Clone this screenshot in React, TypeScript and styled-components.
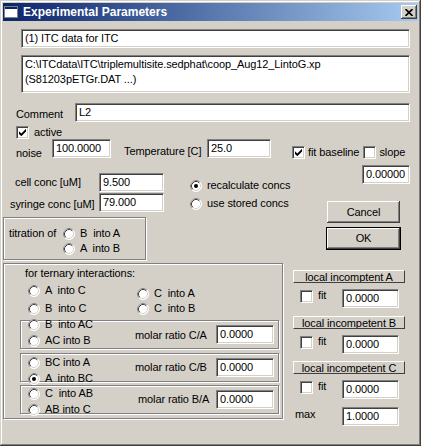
import React from "react";
import styled, { createGlobalStyle } from "styled-components";

const GlobalStyle = createGlobalStyle`
  html, body { margin: 0; padding: 0; background: #D4D0C8; }
  body { font-family: "Liberation Sans", Arial, sans-serif; font-size: 11px; color: #000; }
  * { box-sizing: border-box; }
`;

const Window = styled.div`
  width: 421px;
  height: 446px;
  background: #d4d0c8;
  padding: 3px;
  box-shadow: inset -1px -1px #404040, inset 1px 1px #d4d0c8, inset -2px -2px #808080, inset 2px 2px #ffffff;
  display: flex;
  flex-direction: column;
  letter-spacing: -0.1px;
`;

const TitleBar = styled.div`
  height: 18px;
  flex: none;
  display: flex;
  align-items: center;
  padding: 0 1px 0 1px;
  background: linear-gradient(to right, #0a246a, #a6caf0);
`;

const TitleText = styled.span`
  flex: 1;
  margin-left: 5px;
  color: #fff;
  font-weight: bold;
  font-size: 12px;
  letter-spacing: 0;
  line-height: 14px;
`;

const CloseButton = styled.div`
  width: 16px;
  height: 14px;
  background: #d4d0c8;
  display: flex;
  align-items: center;
  justify-content: center;
  box-shadow: inset -1px -1px #404040, inset 1px 1px #ffffff, inset -2px -2px #808080;
`;

const Body = styled.div`
  flex: 1;
  display: flex;
  flex-direction: column;
`;

type Box = { $w?: number; $h?: number; $mt?: number; $ml?: number; $mr?: number; $grow?: boolean; $self?: string };

const Field = styled.div<Box>`
  flex: ${(p) => (p.$grow ? "1" : "none")};
  width: ${(p) => (p.$w ? `${p.$w}px` : "auto")};
  height: ${(p) => p.$h ?? 19}px;
  margin: ${(p) => `${p.$mt ?? 0}px ${p.$mr ?? 0}px 0 ${p.$ml ?? 0}px`};
  align-self: ${(p) => p.$self ?? "auto"};
  background: #fff;
  border: 1px solid;
  border-color: #808080 #ffffff #ffffff #808080;
  box-shadow: inset 1px 1px #404040, inset -1px -1px #d4d0c8;
  padding: 1px 3px;
  line-height: 15px;
  white-space: pre;
  overflow: hidden;
`;

const Row = styled.div<{ $mt?: number; $pl?: number; $h?: number; $align?: string }>`
  display: flex;
  align-items: ${(p) => p.$align ?? "flex-start"};
  margin-top: ${(p) => p.$mt ?? 0}px;
  padding-left: ${(p) => p.$pl ?? 0}px;
  height: ${(p) => (p.$h ? `${p.$h}px` : "auto")};
  flex: none;
`;

const Label = styled.span<{ $w?: number; $ml?: number; $mt?: number; $pl?: number }>`
  display: inline-block;
  flex: none;
  width: ${(p) => (p.$w ? `${p.$w}px` : "auto")};
  margin-left: ${(p) => p.$ml ?? 0}px;
  margin-top: ${(p) => p.$mt ?? 0}px;
  padding-left: ${(p) => p.$pl ?? 0}px;
  line-height: 13px;
  white-space: pre;
`;

const CheckBoxFrame = styled.span<{ $ml?: number; $mt?: number }>`
  display: inline-flex;
  flex: none;
  width: 13px;
  height: 13px;
  margin-left: ${(p) => p.$ml ?? 0}px;
  margin-top: ${(p) => p.$mt ?? 0}px;
  background: #fff;
  border: 1px solid;
  border-color: #808080 #ffffff #ffffff #808080;
  box-shadow: inset 1px 1px #404040, inset -1px -1px #d4d0c8;
  align-items: center;
  justify-content: center;
`;

function Check({ checked, ml, mt }: { checked?: boolean; ml?: number; mt?: number }) {
  return (
    <CheckBoxFrame $ml={ml} $mt={mt}>
      {checked && (
        <svg width="7" height="7" viewBox="0 0 7 7">
          <path d="M0 2.2 L2.3 4.5 L7 -0.2 L7 2.6 L2.3 7.2 L0 4.9 Z" fill="#000" />
        </svg>
      )}
    </CheckBoxFrame>
  );
}

const RadioSvg = styled.svg`
  flex: none;
  display: block;
`;

function Radio({ checked }: { checked?: boolean }) {
  return (
    <RadioSvg width="12" height="12" viewBox="0 0 12 12">
      <circle cx="6" cy="6" r="5.5" fill="#fff" stroke="#fff" />
      <path d="M2.11 9.89 A5.5 5.5 0 0 1 9.89 2.11" stroke="#808080" fill="none" />
      <path d="M2.82 9.18 A4.5 4.5 0 0 1 9.18 2.82" stroke="#404040" fill="none" />
      <path d="M9.18 2.82 A4.5 4.5 0 0 1 2.82 9.18" stroke="#d4d0c8" fill="none" />
      {checked && <circle cx="6" cy="6" r="2" fill="#000" />}
    </RadioSvg>
  );
}

const RadioCol = styled.div<{ $ml?: number; $mt?: number; $gap?: number; $w?: number }>`
  display: flex;
  flex-direction: column;
  flex: none;
  width: ${(p) => (p.$w ? `${p.$w}px` : "auto")};
  margin-left: ${(p) => p.$ml ?? 0}px;
  margin-top: ${(p) => p.$mt ?? 0}px;
  gap: ${(p) => p.$gap ?? 2}px;
`;

const RadioItem = styled.div`
  display: flex;
  align-items: center;
  height: 13px;
  gap: 5px;
  line-height: 13px;
  white-space: pre;
`;

function Opt({ label, checked }: { label: string; checked?: boolean }) {
  return (
    <RadioItem>
      <Radio checked={checked} />
      <span>{label}</span>
    </RadioItem>
  );
}

const GroupBox = styled.div<Box>`
  flex: none;
  width: ${(p) => p.$w}px;
  height: ${(p) => p.$h}px;
  margin-top: ${(p) => p.$mt ?? 0}px;
  margin-left: ${(p) => p.$ml ?? 0}px;
  border: 1px solid #808080;
  box-shadow: inset 1px 1px #ffffff, 1px 1px 0 #ffffff;
  display: flex;
  flex-direction: column;
`;

const SubBox = styled(GroupBox)`
  flex-direction: row;
  align-items: flex-start;
  padding-left: 7px;
`;

const Columns = styled.div`
  display: flex;
  margin-top: 7px;
`;

const LeftCol = styled.div`
  width: 280px;
  flex: none;
  display: flex;
  flex-direction: column;
`;

const RightCol = styled.div`
  flex: 1;
  margin-left: 10px;
  display: flex;
  flex-direction: column;
`;

const ConcArea = styled.div`
  display: flex;
  margin-top: 8px;
`;

const Stack = styled.div`
  display: flex;
  flex-direction: column;
`;

const Button = styled.div<Box>`
  flex: none;
  width: ${(p) => p.$w}px;
  height: ${(p) => p.$h}px;
  margin-top: ${(p) => p.$mt ?? 0}px;
  margin-left: ${(p) => p.$ml ?? 0}px;
  background: #d4d0c8;
  box-shadow: inset -1px -1px #404040, inset 1px 1px #ffffff, inset -2px -2px #808080, inset 2px 2px #d4d0c8;
  display: flex;
  align-items: center;
  justify-content: center;
  line-height: 13px;
`;

const DefaultButton = styled(Button)`
  border: 1px solid #000;
`;

const HeaderButton = styled.div<{ $mt?: number }>`
  flex: none;
  width: 112px;
  height: 13px;
  margin-top: ${(p) => p.$mt ?? 0}px;
  background: #d4d0c8;
  border-top: 1px solid #ffffff;
  border-left: 1px solid #ffffff;
  border-right: 1px solid #404040;
  border-bottom: 1px solid #404040;
  overflow: hidden;
  text-align: center;
  line-height: 11px;
  padding-top: 1px;
  white-space: pre;
`;

const Heading = styled.div`
  padding: 3px 0 0 21px;
  line-height: 13px;
`;

const TernaryRadios = styled.div`
  display: flex;
  margin: 4px 0 0 24px;
`;

const SubBoxes = styled.div`
  display: flex;
  flex-direction: column;
  margin-left: 16px;
`;

function FitRow({ mt, value }: { mt: number; value: string }) {
  return (
    <Row $mt={mt} $h={19}>
      <Check ml={7} mt={1} />
      <Label $ml={5} $w={24} $mt={0}>fit</Label>
      <Field $w={57}>{value}</Field>
    </Row>
  );
}

function RatioBox({ mt, radioMt, a, b, bChecked, ratio, labelMt, labelPl }: {
  mt: number; radioMt: number; a: string; b: string; bChecked?: boolean; ratio: string; labelMt: number; labelPl: number;
}) {
  return (
    <SubBox $w={259} $h={29} $mt={mt}>
      <RadioCol $w={107} $mt={radioMt} $gap={3}>
        <Opt label={a} />
        <Opt label={b} checked={bChecked} />
      </RadioCol>
      <Label $w={81} $mt={labelMt} $pl={labelPl}>{ratio}</Label>
      <Field $w={58} $mt={4}>0.0000</Field>
    </SubBox>
  );
}

export default function App() {
  return (
    <>
      <GlobalStyle />
      <Window>
        <TitleBar>
          <svg width="14" height="12" viewBox="0 0 14 12" style={{ display: "block" }}>
            <rect x="0.5" y="0.5" width="13" height="11" fill="#fff" stroke="#808080" />
            <rect x="1" y="1" width="12" height="2" fill="#0a246a" />
          </svg>
          <TitleText>Experimental Parameters</TitleText>
          <CloseButton>
            <svg width="8" height="7" viewBox="0 0 8 7">
              <path d="M0.5 0 L7.5 7 M7.5 0 L0.5 7" stroke="#000" strokeWidth="1.6" />
            </svg>
          </CloseButton>
        </TitleBar>
        <Body>
          <Field $mt={8} $ml={18} $mr={8}>(1) ITC data for ITC</Field>
          <Field $mt={7} $ml={18} $mr={8} $h={38}>
            {"C:\\ITCdata\\ITC\\triplemultisite.sedphat\\coop_Aug12_LintoG.xp\n(S81203pETGr.DAT ...)"}
          </Field>
          <Row $mt={10} $pl={13}>
            <Label $w={59} $mt={5}>Comment</Label>
            <Field $grow $mr={8}>L2</Field>
          </Row>
          <Row $mt={4} $pl={13} $align="center" $h={13}>
            <Check checked />
            <Label $ml={5}>active</Label>
          </Row>
          <Row $pl={13} $h={19}>
            <Label $w={36} $mt={8}>noise</Label>
            <Field $w={59}>100.0000</Field>
            <Label $ml={13} $w={83} $mt={6}>Temperature [C]</Label>
            <Field $w={64}>25.0</Field>
            <Check checked ml={21} mt={7} />
            <Label $ml={3} $mt={7}>fit baseline</Label>
            <Check ml={4} mt={7} />
            <Label $ml={3} $mt={7}>slope</Label>
          </Row>
          <Columns>
            <LeftCol>
              <ConcArea>
                <Stack>
                  <Row $h={19}>
                    <Label $w={96} $pl={12} $mt={3}>cell conc [uM]</Label>
                    <Field $w={65}>9.500</Field>
                  </Row>
                  <Row $mt={1} $h={19}>
                    <Label $w={96} $pl={7} $mt={5}>syringe conc [uM]</Label>
                    <Field $w={65}>79.000</Field>
                  </Row>
                </Stack>
                <RadioCol $ml={26} $mt={6} $gap={5}>
                  <Opt label="recalculate concs" checked />
                  <Opt label="use stored concs" />
                </RadioCol>
              </ConcArea>
              <GroupBox $w={143} $h={43} $mt={5}>
                <Row $mt={9} $pl={5}>
                  <Label $w={54}>titration of</Label>
                  <RadioCol $gap={2}>
                    <Opt label="B  into A" />
                    <Opt label="A  into B" />
                  </RadioCol>
                </Row>
              </GroupBox>
              <GroupBox $w={280} $h={156} $mt={3}>
                <Heading>for ternary interactions:</Heading>
                <TernaryRadios>
                  <RadioCol $w={109} $gap={5}>
                    <Opt label="A  into C" />
                    <Opt label="B  into C" />
                  </RadioCol>
                  <RadioCol $mt={3} $gap={2}>
                    <Opt label="C  into A" />
                    <Opt label="C  into B" />
                  </RadioCol>
                </TernaryRadios>
                <SubBoxes>
                  <RatioBox mt={5} radioMt={-3} a="B  into AC" b="AC into B" ratio="molar ratio C/A" labelMt={8} labelPl={0} />
                  <RatioBox mt={4} radioMt={2} a="BC into A" b="A  into BC" bChecked ratio="molar ratio C/B" labelMt={7} labelPl={0} />
                  <RatioBox mt={3} radioMt={1} a="C  into AB" b="AB into C" ratio="molar ratio B/A" labelMt={7} labelPl={3} />
                </SubBoxes>
              </GroupBox>
            </LeftCol>
            <RightCol>
              <Field $w={48} $self="flex-end" $mr={8}>0.00000</Field>
              <Button $mt={17} $ml={34} $w={73} $h={22}>Cancel</Button>
              <DefaultButton $mt={4} $ml={33} $w={75} $h={23}>OK</DefaultButton>
              <HeaderButton $mt={20}>local incomptent A</HeaderButton>
              <FitRow mt={6} value="0.0000" />
              <HeaderButton $mt={8}>local incompetent B</HeaderButton>
              <FitRow mt={6} value="0.0000" />
              <HeaderButton $mt={7}>local incompetent C</HeaderButton>
              <FitRow mt={6} value="0.0000" />
              <Row $mt={8} $h={19}>
                <Label $ml={2} $w={47} $mt={1}>max</Label>
                <Field $w={57}>1.0000</Field>
              </Row>
            </RightCol>
          </Columns>
        </Body>
      </Window>
    </>
  );
}
